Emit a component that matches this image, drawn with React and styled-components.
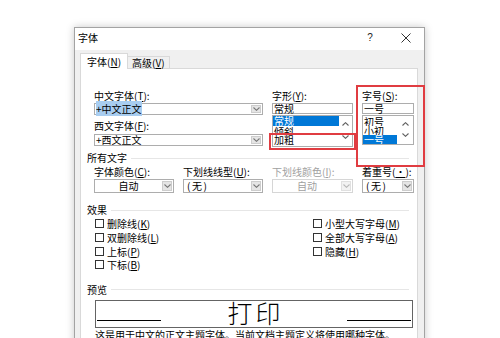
import React from 'react'
import styled, { createGlobalStyle } from 'styled-components'

const GlobalStyle = createGlobalStyle`
  html, body {
    margin: 0;
    padding: 0;
    background: #fff;
    overflow: hidden;
  }
  body {
    font-family: "Noto Sans CJK SC", "Noto Sans", sans-serif;
    font-size: 10px;
    color: #000;
  }
`

const Page = styled.div`
  width: 500px;
  height: 338px;
  box-sizing: border-box;
  padding: 27px 0 0 74px;
  overflow: hidden;
`

const Dialog = styled.div`
  width: 351px;
  height: 330px;
  box-sizing: border-box;
  border: 1px solid #a3a3a3;
  box-shadow: 0 0 8px rgba(0, 0, 0, 0.22);
  background: #f0f0f0;
  display: flex;
  flex-direction: column;
`

const TitleBar = styled.div`
  height: 22px;
  flex-shrink: 0;
  background: #fff;
  display: flex;
  align-items: flex-start;
`

const Title = styled.div`
  flex: 1;
  padding: 4px 0 0 3px;
  line-height: 12px;
`

const TitleButton = styled.div`
  width: 36px;
  height: 22px;
  display: flex;
  align-items: center;
  justify-content: center;
  font-family: "Liberation Sans", sans-serif;
  font-size: 10px;
  color: #222;
  padding-bottom: 3px;
  box-sizing: border-box;
`

const Body = styled.div`
  flex: 1;
  display: flex;
  flex-direction: column;
  padding: 3px 6px 0 5px;
`

const Tabs = styled.div`
  display: flex;
  align-items: flex-end;
  height: 16px;
  margin-bottom: -1px;
  position: relative;
  z-index: 1;
`

const Tab = styled.div`
  height: ${p => (p.$active ? 16 : 13)}px;
  box-sizing: border-box;
  padding: 0 ${p => (p.$active ? 6 : 4)}px;
  line-height: ${p => (p.$active ? 15 : 12)}px;
  background: ${p => (p.$active ? '#fff' : '#f0f0f0')};
  border: 1px solid #d9d9d9;
  border-bottom: ${p => (p.$active ? 'none' : '1px solid #d9d9d9')};
  border-left: ${p => (p.$active ? '1px solid #d9d9d9' : 'none')};
  white-space: nowrap;
`

const Panel = styled.div`
  flex: 1;
  background: #fff;
  border: 1px solid #d9d9d9;
  padding: 0 0 0 6px;
`

const Key = styled.span`
  text-decoration: underline;
  text-underline-offset: 1px;
`

const TopGrid = styled.div`
  display: grid;
  grid-template-columns: 169px 81px 52px;
  column-gap: 9px;
  margin: 21px 0 0 7px;
  align-items: start;
`

const FourGrid = styled.div`
  display: grid;
  grid-template-columns: 80px 80px 81px 52px;
  column-gap: 9px;
  margin: 2px 0 0 7px;
`

const Column = styled.div`
  display: flex;
  flex-direction: column;
  position: relative;
`

const Label = styled.div`
  height: 12px;
  line-height: 12px;
  margin-top: ${p => p.$mt || 0}px;
  white-space: nowrap;
  color: ${p => (p.$disabled ? '#a0a0a0' : '#000')};
`

const Field = styled.div`
  height: ${p => p.$h || 12}px;
  margin-top: ${p => p.$mt || 0}px;
  box-sizing: border-box;
  border: 1px solid ${p => (p.$disabled ? '#d6d6d6' : '#adadad')};
  background: #fff;
  display: flex;
  align-items: stretch;
  color: ${p => (p.$disabled ? '#a0a0a0' : '#000')};
`

const FieldText = styled.div`
  flex: 1;
  padding-left: ${p => p.$pl ?? 1}px;
  line-height: ${p => p.$lh || 10}px;
  text-align: ${p => (p.$center ? 'center' : 'left')};
  letter-spacing: ${p => p.$ls || 0}px;
  white-space: nowrap;
`

const Selected = styled.span`
  background: #a8cdf0;
`

const DropButton = styled.div`
  width: 10px;
  box-sizing: border-box;
  margin: 1px;
  background: ${p => (p.$disabled ? '#f2f2f2' : '#e5e5e5')};
  border: 1px solid ${p => (p.$disabled ? '#e0e0e0' : '#cdcdcd')};
  display: flex;
  align-items: center;
  justify-content: center;
`

const List = styled.div`
  height: ${p => p.$h}px;
  margin-top: 1px;
  box-sizing: border-box;
  border: 1px solid #adadad;
  display: flex;
  position: relative;
`

const Items = styled.div`
  flex: 1;
  padding-top: ${p => p.$pt || 0}px;
  overflow: hidden;
`

const Item = styled.div`
  height: ${p => p.$h}px;
  line-height: ${p => p.$lh || p.$h}px;
  padding-left: 1px;
  overflow: hidden;
  white-space: nowrap;
  background: ${p => (p.$selected ? '#0078d7' : 'transparent')};
  color: ${p => (p.$selected ? '#fff' : '#000')};
`

const ScrollBar = styled.div`
  width: ${p => p.$w}px;
  display: flex;
  flex-direction: column;
  align-items: center;
  justify-content: space-between;
  padding: 6px 0 7px;
  box-sizing: border-box;
`

const Annotation = styled.div`
  position: absolute;
  top: ${p => p.$t}px;
  left: ${p => p.$l}px;
  right: ${p => p.$r}px;
  bottom: ${p => p.$b}px;
  border: 2px solid #e03c41;
  pointer-events: none;
`

const SectionTitle = styled.div`
  display: flex;
  align-items: center;
  height: 12px;
  line-height: 12px;
  margin-top: ${p => p.$mt}px;
  margin-right: 8px;

  &::after {
    content: '';
    flex: 1;
    margin-left: 4px;
    border-top: 1px solid #e6e6e6;
  }
`

const Effects = styled.div`
  display: grid;
  grid-template-columns: 218px auto;
  margin: 1px 0 0 8px;
`

const CheckRow = styled.div`
  height: 13.7px;
  display: flex;
  align-items: center;
  gap: 3px;
  white-space: nowrap;
`

const CheckBox = styled.div`
  width: 9px;
  height: 9px;
  box-sizing: border-box;
  border: 1px solid #333;
  background: #fff;
`

const Preview = styled.div`
  width: 318px;
  height: 28px;
  margin: 4px 0 0 8px;
  box-sizing: border-box;
  border: 1px solid #646464;
  display: flex;
  padding: 0 1px;
`

const PreviewLine = styled.div`
  width: 64px;
  align-self: flex-end;
  margin-bottom: 6px;
  border-top: 1px solid #000;
`

const PreviewText = styled.div`
  flex: 1;
  height: 22px;
  text-align: center;
  font-size: 25px;
  font-weight: 300;
  line-height: 22px;
  letter-spacing: 3px;
  padding-left: 3px;
`

const Note = styled.div`
  margin: 1px 0 0 8px;
  line-height: 12px;
  white-space: nowrap;
`

const Chevron = ({ up, color = '#606060' }) => (
  <svg width="7" height="4" viewBox="0 0 7 4">
    <path
      d={up ? 'M0.5 3.5 L3.5 0.7 L6.5 3.5' : 'M0.5 0.5 L3.5 3.3 L6.5 0.5'}
      fill="none"
      stroke={color}
      strokeWidth="1.1"
    />
  </svg>
)

const Close = () => (
  <svg width="10" height="10" viewBox="0 0 10 10">
    <path d="M0.5 0.5 L9.5 9.5 M9.5 0.5 L0.5 9.5" stroke="#333" strokeWidth="1" />
  </svg>
)

const Combo = ({ children, center, disabled, textProps }) => (
  <Field $h={14} $mt={1} $disabled={disabled}>
    <FieldText $lh={12} $center={center} {...textProps}>{children}</FieldText>
    <DropButton $disabled={disabled}>
      <Chevron color={disabled ? '#b8b8b8' : '#777'} />
    </DropButton>
  </Field>
)

const Check = ({ children }) => (
  <CheckRow>
    <CheckBox />
    <span>{children}</span>
  </CheckRow>
)

const App = () => (
  <Page>
    <GlobalStyle />
    <Dialog>
      <TitleBar>
        <Title>字体</Title>
        <TitleButton>?</TitleButton>
        <TitleButton><Close /></TitleButton>
      </TitleBar>
      <Body>
        <Tabs>
          <Tab $active>字体(<Key>N</Key>)</Tab>
          <Tab>高级(<Key>V</Key>)</Tab>
        </Tabs>
        <Panel>
          <TopGrid>
            <Column>
              <Label>中文字体(<Key>T</Key>):</Label>
              <Field $mt={1}>
                <FieldText><Selected>+中文正文</Selected></FieldText>
                <DropButton><Chevron color="#777" /></DropButton>
              </Field>
              <Label $mt={5}>西文字体(<Key>F</Key>):</Label>
              <Field $mt={2}>
                <FieldText>+西文正文</FieldText>
                <DropButton><Chevron color="#777" /></DropButton>
              </Field>
            </Column>
            <Column>
              <Label>字形(<Key>Y</Key>):</Label>
              <Field $h={11} $mt={1}>
                <FieldText $lh={9}>常规</FieldText>
              </Field>
              <List $h={32}>
                <Items>
                  <Item $h={10} $selected>常规</Item>
                  <Item $h={7} $lh={12}>倾斜</Item>
                  <Item $h={13}>加粗</Item>
                </Items>
                <ScrollBar $w={13}>
                  <Chevron up />
                  <Chevron />
                </ScrollBar>
                <Annotation $t={17} $l={-4} $r={-4} $b={-4} />
              </List>
            </Column>
            <Column>
              <Label>字号(<Key>S</Key>):</Label>
              <Field $h={11} $mt={1}>
                <FieldText $lh={9}>一号</FieldText>
              </Field>
              <List $h={30}>
                <Items $pt={1}>
                  <Item $h={9}>初号</Item>
                  <Item $h={9}>小初</Item>
                  <Item $h={9} $selected>一号</Item>
                </Items>
                <ScrollBar $w={16}>
                  <Chevron up />
                  <Chevron />
                </ScrollBar>
              </List>
              <Annotation $t={-5} $l={-6} $r={-11} $b={-22} />
            </Column>
          </TopGrid>

          <SectionTitle $mt={5}>所有文字</SectionTitle>
          <FourGrid>
            <Column>
              <Label>字体颜色(<Key>C</Key>):</Label>
              <Combo center>自动</Combo>
            </Column>
            <Column>
              <Label>下划线线型(<Key>U</Key>):</Label>
              <Combo textProps={{ $pl: 3, $ls: 1.5 }}>(无)</Combo>
            </Column>
            <Column>
              <Label $disabled>下划线颜色(<Key>I</Key>):</Label>
              <Combo center disabled>自动</Combo>
            </Column>
            <Column>
              <Label>着重号(<Key>·</Key>):</Label>
              <Combo textProps={{ $pl: 3, $ls: 1.5 }}>(无)</Combo>
            </Column>
          </FourGrid>

          <SectionTitle $mt={11}>效果</SectionTitle>
          <Effects>
            <div>
              <Check>删除线(<Key>K</Key>)</Check>
              <Check>双删除线(<Key>L</Key>)</Check>
              <Check>上标(<Key>P</Key>)</Check>
              <Check>下标(<Key>B</Key>)</Check>
            </div>
            <div>
              <Check>小型大写字母(<Key>M</Key>)</Check>
              <Check>全部大写字母(<Key>A</Key>)</Check>
              <Check>隐藏(<Key>H</Key>)</Check>
            </div>
          </Effects>

          <SectionTitle $mt={12}>预览</SectionTitle>
          <Preview>
            <PreviewLine />
            <PreviewText>打印</PreviewText>
            <PreviewLine />
          </Preview>
          <Note>这是用于中文的正文主题字体。当前文档主题定义将使用哪种字体。</Note>
        </Panel>
      </Body>
    </Dialog>
  </Page>
)

export default App
